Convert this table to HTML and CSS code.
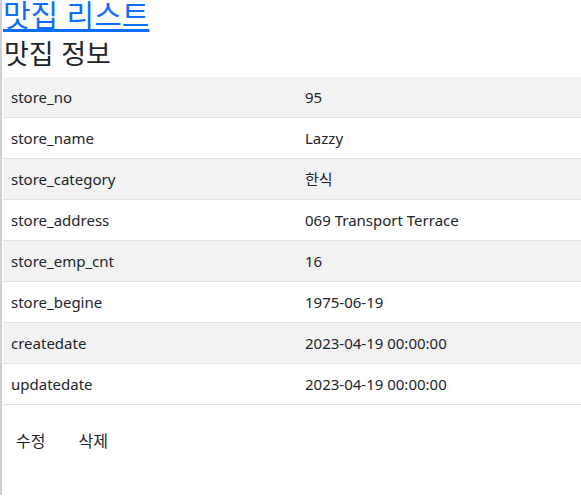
FILE: index.html
```html
<!DOCTYPE html>
<html lang="ko">
<head>
<meta charset="utf-8">
<title>맛집 정보</title>
<link rel="stylesheet" href="styles.css">
</head>
<body>
<div class="page">
  <a class="list-link" href="#">맛집 리스트</a>
  <h3 class="title">맛집 정보</h3>
  <table class="info">
    <tbody>
      <tr><td class="key">store_no</td><td>95</td></tr>
      <tr><td class="key">store_name</td><td>Lazzy</td></tr>
      <tr><td class="key">store_category</td><td>한식</td></tr>
      <tr><td class="key">store_address</td><td>069 Transport Terrace</td></tr>
      <tr><td class="key">store_emp_cnt</td><td>16</td></tr>
      <tr><td class="key">store_begine</td><td>1975-06-19</td></tr>
      <tr><td class="key">createdate</td><td>2023-04-19 00:00:00</td></tr>
      <tr><td class="key">updatedate</td><td>2023-04-19 00:00:00</td></tr>
    </tbody>
  </table>
  <div class="actions">
    <button class="btn" type="button">수정</button>
    <button class="btn" type="button">삭제</button>
  </div>
</div>
</body>
</html>
```

FILE: styles.css
```css
html, body {
  margin: 0;
  padding: 0;
  height: 100%;
}
body {
  background: #fff;
  color: #212529;
  font-family: "Noto Sans", "Noto Sans CJK KR", sans-serif;
  font-size: 15px;
  overflow: hidden;
}
.page {
  border-left: 2px solid #d0d0d0;
  padding-left: 1px;
  min-height: 100%;
  box-sizing: border-box;
}
.list-link {
  display: block;
  width: max-content;
  font-family: "Noto Sans CJK KR", sans-serif;
  font-size: 30px;
  line-height: 32px;
  color: #0d6efd;
  text-decoration: underline;
  text-underline-offset: 3px;
  margin-top: -3px;
}
.title {
  font-family: "Noto Sans CJK KR", sans-serif;
  font-size: 27px;
  font-weight: 400;
  line-height: 34px;
  margin: 7px 0 7px 1px;
}
.info {
  border-collapse: collapse;
  width: 100%;
}
.info td {
  padding: 8px;
  height: 24px;
  line-height: 24px;
  border-bottom: 1px solid #dee2e6;
  vertical-align: middle;
  font-family: "Noto Sans", "Noto Sans CJK KR", sans-serif;
}
.info td.key {
  width: 278px;
}
.info tr:nth-child(odd) td {
  background: #f2f2f2;
}
.actions {
  display: flex;
  gap: 7px;
  margin-top: 16px;
}
.btn {
  font-family: "Noto Sans CJK KR", sans-serif;
  font-size: 16px;
  line-height: 24px;
  padding: 6px 12px;
  border: 1px solid transparent;
  background: transparent;
  color: #212529;
  border-radius: 6px;
  margin-left: 0;
}
```
